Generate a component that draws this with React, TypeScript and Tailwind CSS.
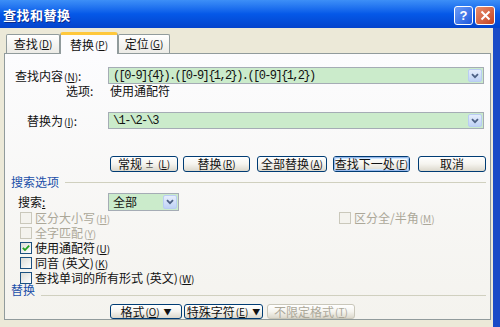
import React from 'react';

const cjk = { fontFamily: '"Noto Sans CJK SC", "Noto Sans", sans-serif' };

function Key({ k }: { k: string }) {
  return (
    <span className="text-[10px] ml-[1px] leading-none">
      (<span className="underline">{k}</span>)
    </span>
  );
}

function Chevron() {
  return (
    <svg width="8" height="6" viewBox="0 0 8 6">
      <path d="M1 1.2 L4 4.2 L7 1.2" fill="none" stroke="#4d6185" strokeWidth="1.8" />
    </svg>
  );
}

function DropBtn() {
  return (
    <div className="w-[14px] h-full flex items-center justify-center rounded-[2px] border border-[#b9cdf3] bg-gradient-to-b from-[#e6eefc] to-[#bfd2f5]">
      <Chevron />
    </div>
  );
}

function Combo({ text, w }: { text: string; w: string }) {
  return (
    <div className={`${w} h-full flex items-stretch border border-[#a5acb5] bg-[#cbebcb] p-[1px]`}>
      <div
        className="flex-1 flex items-center pl-[3px] text-[12px] leading-none tracking-[-1.6px] text-[#111]"
        style={{ fontFamily: '"Liberation Mono", monospace' }}
      >
        {text}
      </div>
      <DropBtn />
    </div>
  );
}

function Btn({
  children,
  w,
  focus,
  disabled,
}: {
  children: React.ReactNode;
  w: string;
  focus?: boolean;
  disabled?: boolean;
}) {
  const border = disabled ? 'border-[#c9c7ba] text-[#aca899]' : 'border-[#003c74] text-[#111]';
  return (
    <div
      className={`${w} h-full flex items-center justify-center whitespace-nowrap rounded-[3px] border ${border} bg-gradient-to-b from-[#ffffff] via-[#f5f4ef] to-[#dcd8cc] text-[12px] leading-none`}
    >
      <div
        className={`w-full h-full flex items-center justify-center rounded-[2px] ${
          focus ? 'shadow-[inset_0_0_0_1px_#98b8ea,inset_0_0_0_2px_#cee7ff]' : ''
        }`}
      >
        {children}
      </div>
    </div>
  );
}

function Check({ label, k, checked, disabled }: { label: string; k: string; checked?: boolean; disabled?: boolean }) {
  return (
    <div className={`flex items-center gap-[3px] ${disabled ? 'text-[#aca899]' : 'text-[#111]'}`}>
      <div
        className={`w-[12px] h-[12px] border flex items-center justify-center ${
          disabled ? 'border-[#cac8bb] bg-[#f4f3ee]' : 'border-[#1c5180] bg-gradient-to-br from-[#dcdcd7] to-white'
        }`}
      >
        {checked && (
          <svg width="8" height="8" viewBox="0 0 8 8">
            <path d="M0.8 3.8 L3 6 L7.2 1.6" fill="none" stroke="#21a121" strokeWidth="1.8" />
          </svg>
        )}
      </div>
      <span className="text-[12px] leading-none whitespace-nowrap">
        {label}
        <Key k={k} />
      </span>
    </div>
  );
}

export default function App() {
  return (
    <div className="w-[500px] h-[327px] flex flex-col overflow-hidden bg-[#ece9d8] leading-none" style={cjk}>
      {/* title bar */}
      <div className="h-[28px] shrink-0 flex items-center justify-between pl-[3px] pr-[5px] bg-gradient-to-b from-[#3d8ff7] via-[#0558e8] to-[#0443cc]">
        <span className="text-white font-bold text-[13px] tracking-[0.5px] [text-shadow:1px_1px_0_#0a2a8a]">查找和替换</span>
        <div className="flex gap-[2px] pt-[2px]">
          <div className="w-[19px] h-[19px] rounded-[3px] border border-white bg-gradient-to-br from-[#6d9cf7] to-[#1d56dc] flex items-center justify-center text-white font-bold text-[13px] leading-none" style={{ fontFamily: '"Liberation Sans", sans-serif' }}>
            ?
          </div>
          <div className="w-[20px] h-[19px] rounded-[3px] border border-white bg-gradient-to-br from-[#e88e6e] to-[#c4401c] flex items-center justify-center">
            <svg width="11" height="11" viewBox="0 0 11 11">
              <path d="M1.5 1.5 L9.5 9.5 M9.5 1.5 L1.5 9.5" stroke="white" strokeWidth="2" />
            </svg>
          </div>
        </div>
      </div>

      {/* body */}
      <div className="flex-1 flex flex-col border-r-[7px] border-[#1a4bc7] pl-[4px] pr-[2px]">
        {/* tabs */}
        <div className="h-[25px] flex items-end pl-[2px] text-[12px] text-[#111]">
          <div className="w-[54px] h-[19px] flex items-center justify-center border border-b-0 border-[#919b9c] rounded-t-[2px] bg-gradient-to-b from-white to-[#ecebe6]">
            查找<Key k="D" />
          </div>
          <div className="w-[58px] h-[22px] -mb-[1px] flex items-center justify-center border-x border-[#919b9c] border-t-[3px] border-t-[#ffc83c] rounded-t-[3px] bg-[#fcfcfe] z-10">
            替换<Key k="P" />
          </div>
          <div className="w-[52px] h-[19px] flex items-center justify-center border border-b-0 border-[#919b9c] rounded-t-[2px] bg-gradient-to-b from-white to-[#ecebe6]">
            定位<Key k="G" />
          </div>
        </div>

        {/* panel */}
        <div className="h-[267px] flex flex-col border border-[#919b9c] bg-gradient-to-b from-[#fcfcfe] to-[#f4f3ee] text-[12px] leading-none text-[#111]">
          <div className="h-[17px] mt-[13px] flex items-center">
            <div className="w-[103px] pl-[10px] whitespace-nowrap">
              查找内容<Key k="N" />:
            </div>
            <Combo text="([0-9]{4}).([0-9]{1,2}).([0-9]{1,2})" w="w-[376px]" />
          </div>
          <div className="h-[13px] flex items-center">
            <div className="w-[105px] pl-[61px]">选项:</div>
            <div>使用通配符</div>
          </div>
          <div className="h-[17px] mt-[15px] flex items-center">
            <div className="w-[103px] pl-[22px] whitespace-nowrap">
              替换为<Key k="I" />:
            </div>
            <Combo text="\1-\2-\3" w="w-[376px]" />
          </div>

          <div className="h-[16px] mt-[27px] flex pl-[105px] gap-[5px]">
            <Btn w="w-[68px]">
              常规 <span className="text-[9px] px-[3px]">±</span>
              <Key k="L" />
            </Btn>
            <Btn w="w-[67px]">
              替换<Key k="R" />
            </Btn>
            <Btn w="w-[70px] ml-[2px]">
              全部替换<Key k="A" />
            </Btn>
            <Btn w="w-[77px] ml-[1px]" focus>
              查找下一处<Key k="F" />
            </Btn>
            <Btn w="w-[68px] ml-[3px]">取消</Btn>
          </div>

          <div className="h-[14px] mt-[3px] flex items-center gap-[6px] pl-[6px] pr-[4px]">
            <span className="text-[#1a4fa8]">搜索选项</span>
            <div className="flex-1 h-px bg-[#d0d0bf]" />
          </div>

          <div className="h-[17px] mt-[4px] flex items-center">
            <div className="w-[103px] pl-[13px]">
              搜索<span className="underline">:</span>
            </div>
            <div className="w-[71px] h-[18px] flex items-stretch border border-[#a5acb5] bg-[#cbebcb] p-[1px]">
              <div className="flex-1 flex items-center pl-[3px]">全部</div>
              <DropBtn />
            </div>
          </div>

          <div className="flex flex-col pl-[15px]">
            <div className="h-[15px] flex items-center">
              <div className="w-[319px]">
                <Check label="区分大小写" k="H" disabled />
              </div>
              <Check label="区分全/半角" k="M" disabled />
            </div>
            <div className="h-[15px] flex items-center">
              <Check label="全字匹配" k="Y" disabled />
            </div>
            <div className="h-[15px] flex items-center">
              <Check label="使用通配符" k="U" checked />
            </div>
            <div className="h-[15px] flex items-center">
              <Check label="同音 (英文)" k="K" />
            </div>
            <div className="h-[15px] flex items-center">
              <Check label="查找单词的所有形式 (英文)" k="W" />
            </div>
          </div>

          <div className="h-[12px] -mt-[1px] flex items-end gap-[6px] pl-[6px] pr-[4px]">
            <span className="text-[#1a4fa8]">替换</span>
            <div className="flex-1 h-px bg-[#d0d0bf]" />
          </div>

          <div className="h-[15px] mt-[8px] flex pl-[105px] gap-[2px]">
            <Btn w="w-[72px]">
              格式<Key k="O" />
              <span className="text-[8px] pl-[4px]">▼</span>
            </Btn>
            <Btn w="w-[79px]">
              特殊字符<Key k="E" />
              <span className="text-[8px] pl-[4px]">▼</span>
            </Btn>
            <Btn w="w-[88px] ml-[2px]" disabled>
              不限定格式<Key k="T" />
            </Btn>
          </div>
        </div>
      </div>
    </div>
  );
}
